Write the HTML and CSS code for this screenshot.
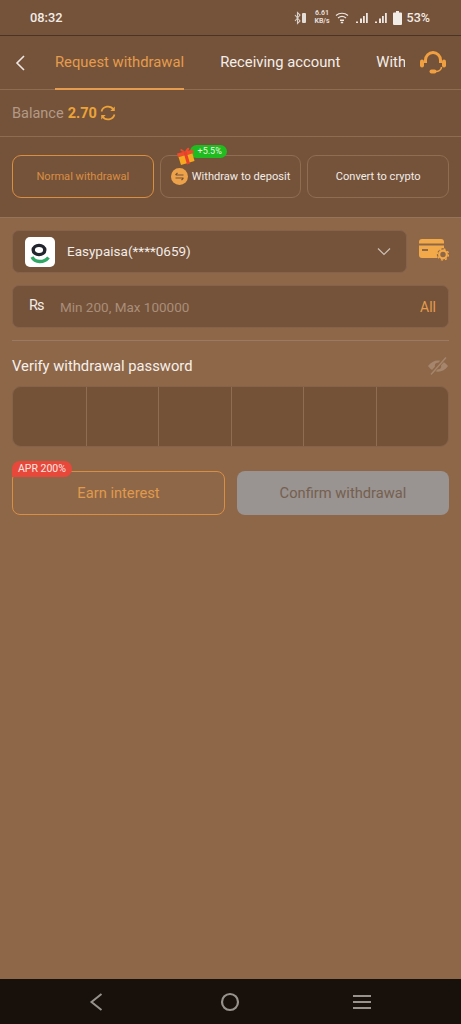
FILE: index.html
```html
<!DOCTYPE html>
<html lang="en">
<head>
<meta charset="utf-8">
<title>Request withdrawal</title>
<link rel="stylesheet" href="styles.css">
</head>
<body>
<div class="screen">
  <header class="top">
    <div class="status">
      <span class="time">08:32</span>
      <div class="status-icons">
        <svg class="si-bt" width="14" height="14" viewBox="0 0 14 14"><path d="M1 4l5 6-2.500 2.500V1.500L6 4 1 10" fill="none" stroke="#d8cfc8" stroke-width="1.100"/><rect x="8" y="2" width="4" height="10" rx="1" fill="#e4dcd6"/></svg>
        <span class="speed">6.61<br>KB/s</span>
        <svg class="si-wifi" width="14" height="12" viewBox="0 0 14 12"><g fill="none" stroke="#eee6e0" stroke-width="1.200"><path d="M1 3.500C4.500 .5 9.500 .5 13 3.500"/><path d="M3 6C5.500 4 8.500 4 11 6"/></g><path d="M5 8.200h4M5.800 10.500h2.400" stroke="#eee6e0" stroke-width="1.400" fill="none"/></svg>
        <svg class="si-sig" width="13" height="12" viewBox="0 0 13 12"><path d="M1 9.500h2v1.500H1zM5 6.500h2V11H5zM8 4h1.800v7H8zM11 1h1.800v10H11z" fill="#eee6e0"/></svg>
        <svg class="si-sig" width="13" height="12" viewBox="0 0 13 12"><path d="M1 9.500h2v1.500H1zM5 6.500h2V11H5zM8 4h1.800v7H8zM11 1h1.800v10H11z" fill="#eee6e0"/></svg>
        <svg class="si-batt" width="9" height="14" viewBox="0 0 9 14"><path d="M3 0h3v1.500h2a1 1 0 0 1 1 1V13a1 1 0 0 1-1 1H1a1 1 0 0 1-1-1V2.500a1 1 0 0 1 1-1h2z" fill="#f2ece7"/></svg>
        <span class="pct">53%</span>
      </div>
    </div>
    <nav class="tabs">
      <svg class="back" width="12" height="18" viewBox="0 0 12 18"><path d="M10 2L3 9l7 7" fill="none" stroke="#efe8e2" stroke-width="1.600"/></svg>
      <div class="tab-strip">
        <span class="tab tab-active">Request withdrawal</span>
        <span class="tab">Receiving account</span>
        <span class="tab tab-cut">Withdrawal records</span>
      </div>
      <svg class="support" width="28" height="26" viewBox="0 0 28 26"><path d="M6.500 13V10a7.500 7.500 0 0 1 15 0v3" fill="none" stroke="#f0a040" stroke-width="3"/><rect x="1" y="9.500" width="4" height="8" rx="2" fill="#f0a040"/><rect x="23" y="9.500" width="4" height="8" rx="2" fill="#f0a040"/><path d="M22.500 17c0 3-3 4.500-6 4.500" fill="none" stroke="#f0a040" stroke-width="1.600"/><rect x="10.500" y="19.500" width="7" height="4" rx="2" fill="#f0a040"/></svg>
    </nav>
    <div class="balance">
      <span class="bal-label">Balance</span>
      <span class="bal-value">2.70</span>
      <svg width="16" height="16" viewBox="0 0 16 16"><path d="M1.500 6.500A6.700 6.700 0 0 1 13.500 4.500M14.500 9.500A6.700 6.700 0 0 1 2.500 11.500" fill="none" stroke="#eda338" stroke-width="1.700"/><path d="M14.800 1.500v4.500h-4.500zM1.200 14.500V10h4.500z" fill="#eda338"/></svg>
    </div>
    <div class="modes">
      <button class="mode mode-active">Normal withdrawal</button>
      <button class="mode">
        <svg width="17" height="17" viewBox="0 0 17 17"><circle cx="8.500" cy="8.500" r="8.500" fill="#eda24a"/><path d="M4.500 7h8M6.500 4.800L4.500 7M4.500 10h8M10.500 12.200l2-2.200" fill="none" stroke="#75533a" stroke-width="1.200"/></svg>
        Withdraw to deposit
        <span class="bonus">+5.5%</span>
        <svg class="gift" width="20" height="19" viewBox="0 0 20 19"><path d="M1 6.500l16-4 .8 3.500-16 4z" fill="#f04a2a"/><path d="M2.500 10l14-3.500 2 7.500-13.500 4z" fill="#f8a820"/><path d="M7.500 5.300l3-.8 3.500 12-3 .9z" fill="#e8402a"/><path d="M9 4.800C7 3 5 1 4.500 2.500S6 5 9 4.800zM9 4.800C10 2 12 0 13 1s-1 3.500-4 3.800z" fill="#f04a2a"/></svg>
      </button>
      <button class="mode">Convert to crypto</button>
    </div>
  </header>
  <main class="form">
    <div class="account-row">
      <div class="field select">
        <span class="logo">
          <svg width="30" height="30" viewBox="0 0 30 30"><path d="M7 20c3 6 12 6 16.500 .5" fill="none" stroke="#2fa866" stroke-width="3.400"/><ellipse cx="14" cy="13" rx="5.800" ry="4.600" fill="none" stroke="#22252e" stroke-width="3.400"/></svg>
        </span>
        <span class="acct">Easypaisa(****0659)</span>
        <svg class="chev" width="14" height="9" viewBox="0 0 14 9"><path d="M1 1.500l6 6 6-6" fill="none" stroke="#cdbfb3" stroke-width="1.200"/></svg>
      </div>
      <svg class="card-gear" width="30" height="24" viewBox="0 0 30 24"><path d="M3 1h19a3 3 0 0 1 3 3v1.500H0V4a3 3 0 0 1 3-3z" fill="#f2a94a"/><path d="M0 7.500h25v2.600a7 7 0 0 0-6.500 9.900H3a3 3 0 0 1-3-3z" fill="#f2a94a"/><rect x="3" y="11" width="6" height="2" fill="#8e6749"/><circle cx="24" cy="16.500" r="3.800" fill="none" stroke="#f2a94a" stroke-width="2.200"/><circle cx="24" cy="16.500" r="5.500" fill="none" stroke="#f2a94a" stroke-width="1.400" stroke-dasharray="2 2.300"/></svg>
    </div>
    <div class="field amount">
      <span class="rs">Rs</span>
      <span class="placeholder">Min 200, Max 100000</span>
      <span class="all">All</span>
    </div>
    <div class="divider"></div>
    <div class="pw-head">
      <span>Verify withdrawal password</span>
      <svg width="22" height="20" viewBox="0 0 22 20"><path d="M1 10c5-7.500 15-7.500 20 0-5 7.500-15 7.500-20 0z" fill="#a5866c"/><circle cx="11" cy="10" r="3.200" fill="#8e6749"/><path d="M18.500 1.500L3.500 18.500" stroke="#8e6749" stroke-width="3.600"/><path d="M19 1.500L4 18.500" stroke="#a5866c" stroke-width="1.400"/></svg>
    </div>
    <div class="pin">
      <span></span><span></span><span></span><span></span><span></span><span></span>
    </div>
    <div class="actions">
      <button class="btn btn-earn">Earn interest<span class="apr">APR 200%</span></button>
      <button class="btn btn-confirm">Confirm withdrawal</button>
    </div>
  </main>
  <footer class="sysnav">
    <svg width="14" height="20" viewBox="0 0 14 20"><path d="M12.500 2L2.500 10l10 8" fill="none" stroke="#98928d" stroke-width="2"/></svg>
    <svg width="20" height="20" viewBox="0 0 20 20"><circle cx="10" cy="10" r="8" fill="none" stroke="#98928d" stroke-width="2.200"/></svg>
    <svg width="20" height="16" viewBox="0 0 20 16"><path d="M1 2h18M1 8h18M1 14h18" fill="none" stroke="#98928d" stroke-width="2.200"/></svg>
  </footer>
</div>
</body>
</html>
```
FILE: styles.css
```css
* { box-sizing: border-box; }
html, body { margin: 0; padding: 0; }
body { font-family: Roboto, "Liberation Sans", sans-serif; }
.screen {
  width: 461px;
  height: 1024px;
  display: flex;
  flex-direction: column;
  background: #8e6749;
  overflow: hidden;
}
.top { background: #75533a; height: 217px; flex: none; }
.status {
  height: 36px;
  display: flex;
  align-items: center;
  justify-content: space-between;
  padding: 0 31px 0 30px;
  border-bottom: 1px solid #4b3426;
  color: #f2ece7;
}
.time { font-size: 12.800px; font-weight: 500; }
.status-icons { display: flex; align-items: center; }
.si-bt { margin-right: 6px; }
.speed {
  font-size: 7px;
  line-height: 7.500px;
  font-weight: 700;
  text-align: center;
  margin-right: 5px;
  color: #e4dcd6;
}
.si-wifi { margin-right: 6px; }
.si-sig { margin-right: 6px; }
.si-batt { margin-right: 5px; }
.pct { font-size: 12.500px; font-weight: 500; }
.tabs {
  height: 54px;
  display: flex;
  align-items: center;
  padding-left: 14px;
  border-bottom: 1px solid #8e6c52;
}
.back { flex: none; margin-right: 29px; }
.tab-strip {
  flex: none;
  width: 350px;
  height: 54px;
  display: flex;
  gap: 36px;
  overflow: hidden;
  white-space: nowrap;
}
.tab {
  font-size: 14.800px;
  line-height: 52px;
  color: #f4eee9;
  height: 54px;
}
.tab-active {
  color: #e59c4c;
  border-bottom: 2px solid #e59c4c;
}
.support { flex: none; margin-left: 14px; }
.balance {
  height: 47px;
  display: flex;
  align-items: center;
  padding-left: 12px;
  border-bottom: 1px solid #8e6c52;
  font-size: 14.500px;
}
.bal-label { color: #b39a86; margin-right: 4px; }
.bal-value { color: #eda338; font-weight: 700; margin-right: 3px; }
.modes {
  display: flex;
  gap: 6px;
  padding: 18px 12px 0;
}
.mode {
  position: relative;
  flex: 1;
  height: 43px;
  display: flex;
  align-items: center;
  justify-content: center;
  gap: 4px;
  padding: 0;
  background: transparent;
  border: 1px solid #8f6d53;
  border-radius: 9px;
  color: #f2ece7;
  font-family: inherit;
  font-size: 11.100px;
  font-weight: 400;
  white-space: nowrap;
}
.mode-active { color: #d98e42; border-color: #d98e42; }
.bonus {
  position: absolute;
  left: 29px;
  top: -11px;
  height: 13px;
  width: 37px;
  line-height: 13px;
  border-radius: 7px;
  background: #1fbb1f;
  color: #e8f7e2;
  font-size: 9px;
  text-align: center;
  padding-left: 3px;
}
.gift { position: absolute; left: 15px; top: -9px; }
.form {
  flex: 1;
  padding: 12px 12px 0;
  border-top: 1px solid #96745a;
}
.account-row { display: flex; align-items: center; justify-content: space-between; }
.field {
  height: 43px;
  display: flex;
  align-items: center;
  background: #75533a;
  border: 1px solid #856249;
  border-radius: 7px;
}
.select { width: 395px; padding: 0 15px 0 12px; }
.logo {
  width: 30px;
  height: 30px;
  flex: none;
  display: flex;
  align-items: center;
  justify-content: center;
  background: #fff;
  border-radius: 5px;
  margin-right: 12px;
}
.acct { flex: 1; color: #f2ece7; font-size: 13.500px; margin-bottom: 1px; }
.card-gear { flex: none; margin-top: -3px; }
.amount { margin-top: 12px; padding: 0 12px 0 16px; }
.rs { color: #f2ece7; font-size: 14.500px; letter-spacing: -1px; width: 31px; margin-bottom: 2px; }
.placeholder { flex: 1; color: #a98e79; font-size: 13.500px; }
.all { color: #e59c4c; font-size: 14px; }
.divider { height: 1px; background: #9a7a62; margin-top: 12px; }
.pw-head {
  display: flex;
  justify-content: space-between;
  align-items: center;
  height: 45px;
  padding-top: 6px;
  padding-bottom: 1px;
  color: #f6f0eb;
  font-size: 14.750px;
}
.pin {
  height: 61px;
  display: grid;
  grid-template-columns: repeat(6, 1fr);
  background: #735237;
  border: 1px solid #856249;
  border-radius: 9px;
}
.pin span { border-left: 1px solid #8f6d53; }
.pin span:first-child { border-left: 0; }
.actions { display: flex; gap: 12px; margin-top: 24px; }
.btn {
  position: relative;
  height: 44px;
  border-radius: 8px;
  font-family: inherit;
  font-size: 14.700px;
  padding: 0;
}
.btn-earn { width: 213px; background: transparent; border: 1px solid #d98e42; color: #e09a4c; }
.btn-confirm { width: 212px; background: #999391; border: 0; color: #75604f; }
.apr {
  position: absolute;
  left: -1px;
  top: -11px;
  width: 60px;
  height: 16px;
  line-height: 15px;
  border-radius: 8px 8px 8px 0;
  background: #e8483a;
  color: #fbe7e2;
  font-size: 10.500px;
}
.sysnav {
  flex: none;
  height: 45px;
  background: #17100b;
  display: flex;
  align-items: center;
  padding-left: 89px;
}
.sysnav svg:nth-child(2) { margin-left: 117px; }
.sysnav svg:nth-child(3) { margin-left: 112px; }
```
